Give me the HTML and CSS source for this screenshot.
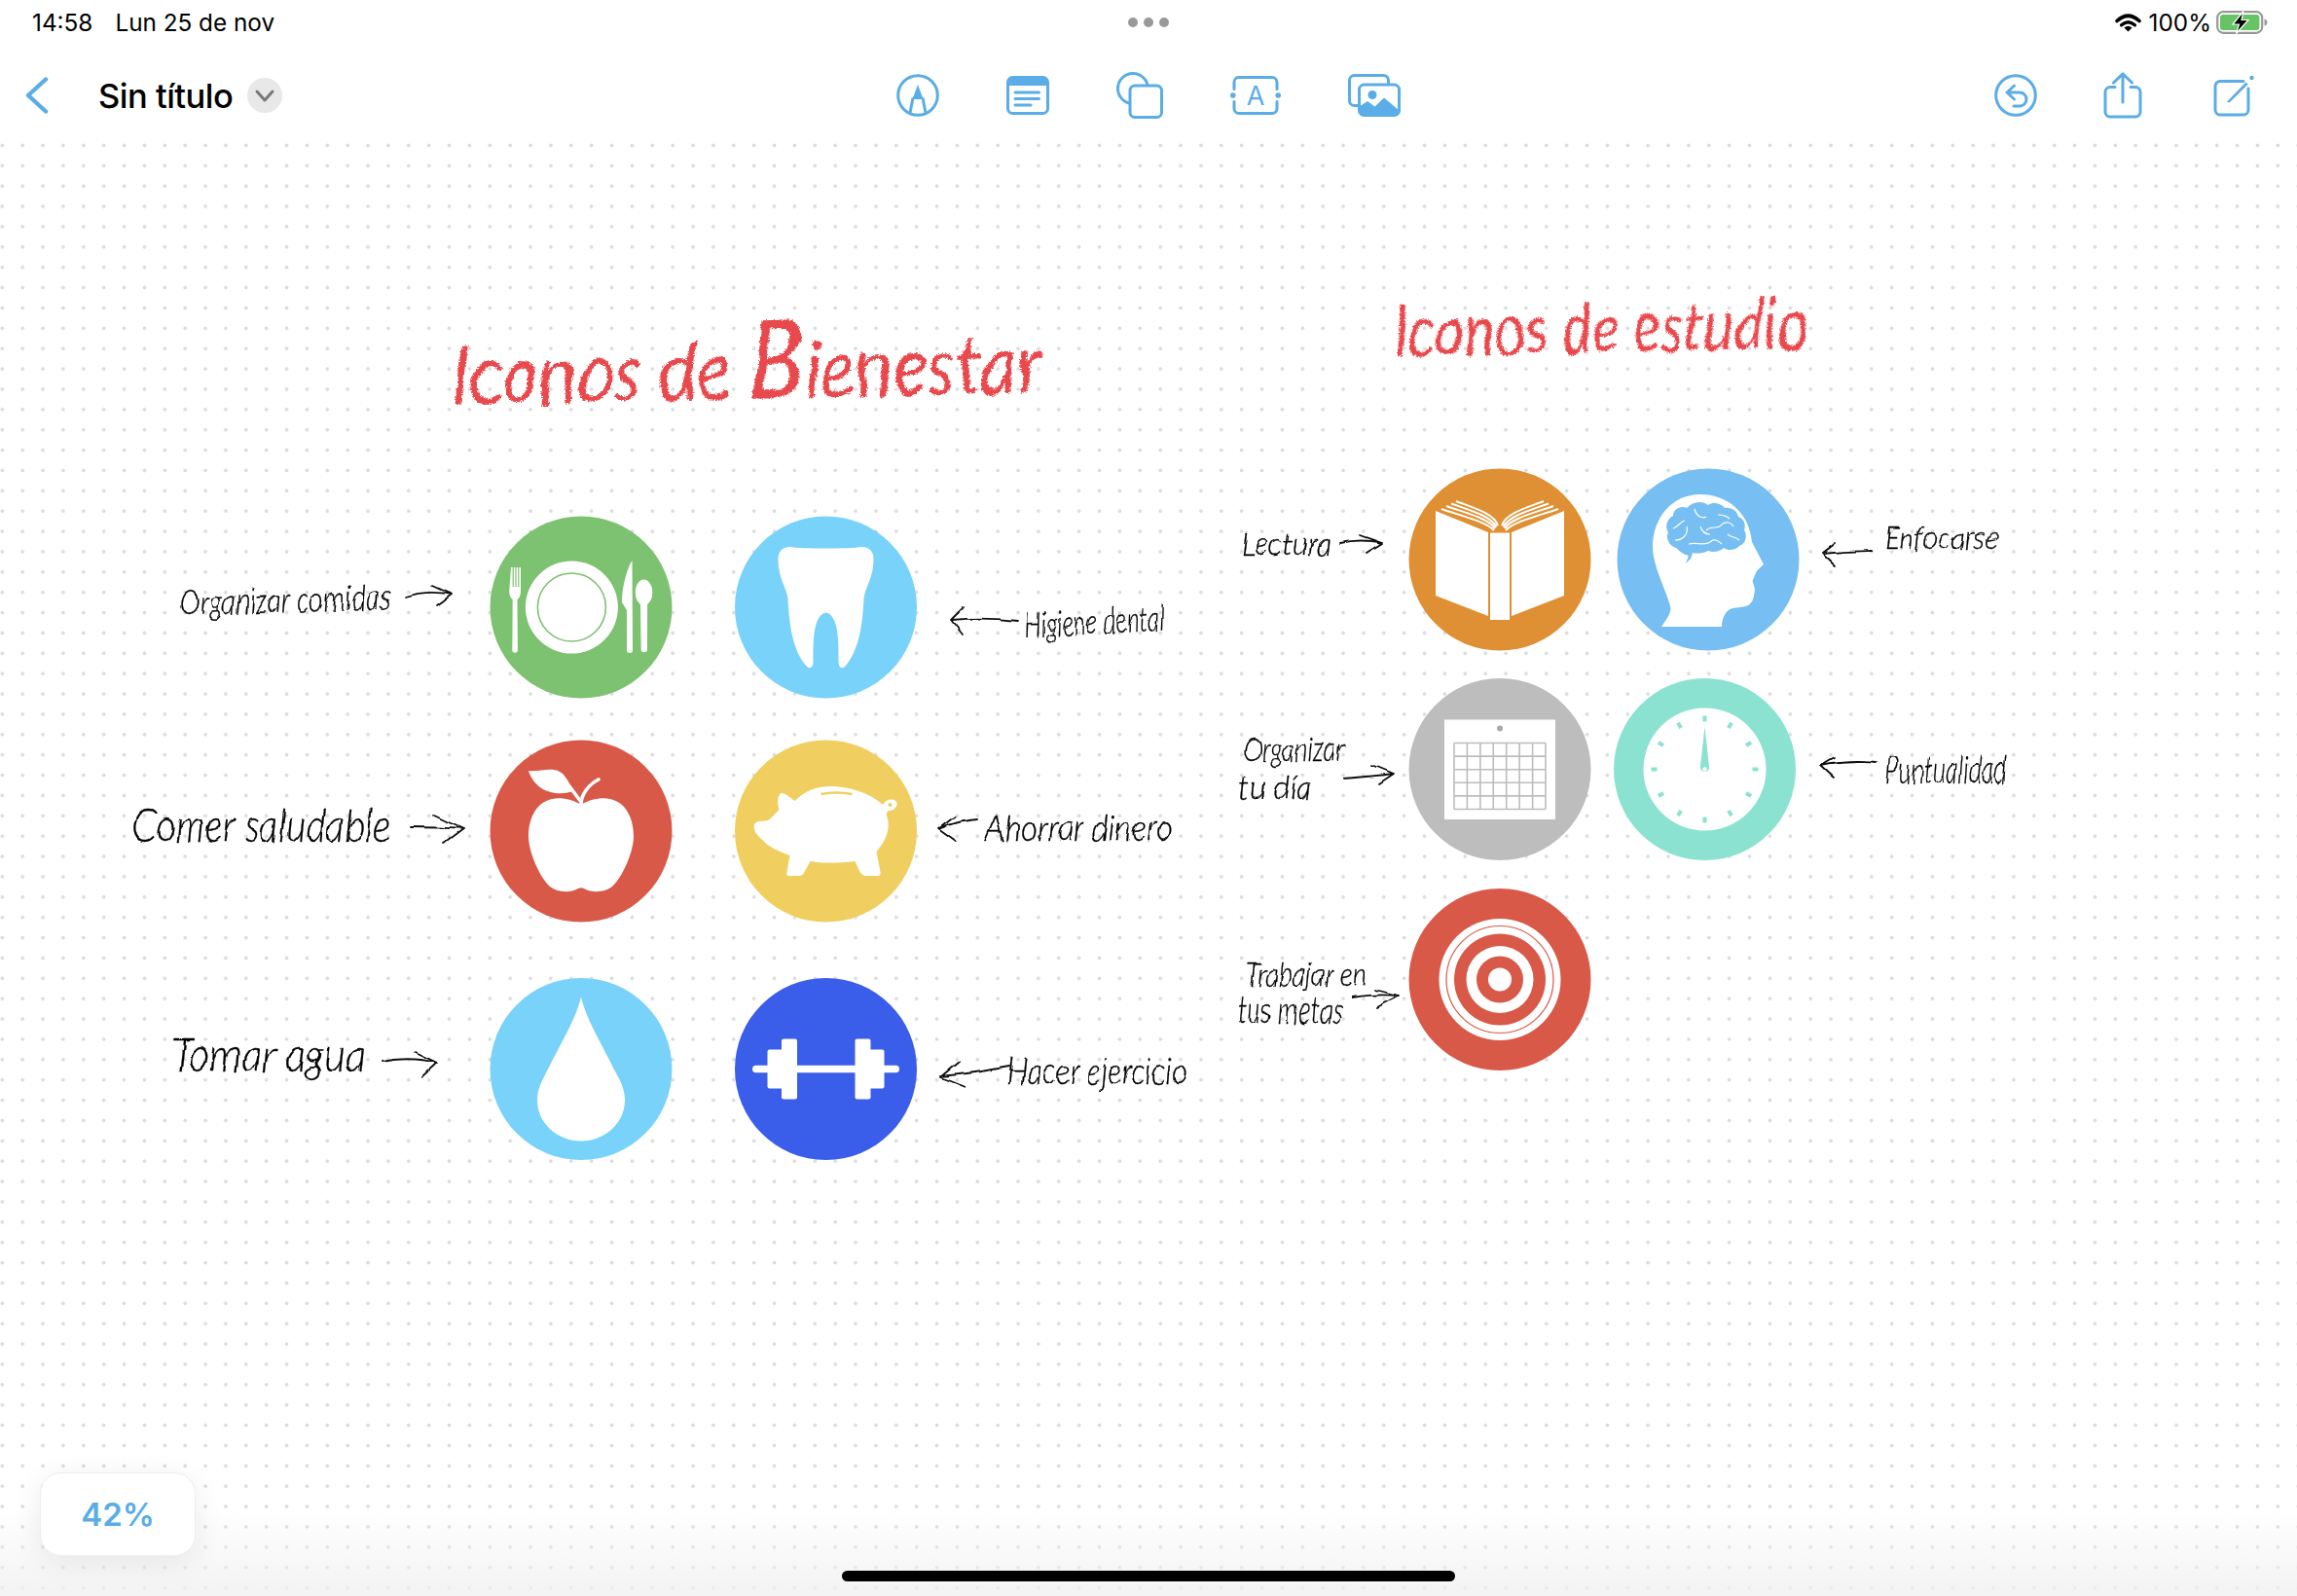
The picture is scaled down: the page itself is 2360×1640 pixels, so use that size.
FILE: index.html
```html
<!DOCTYPE html>
<html lang="es">
<head>
    <meta charset="UTF-8">
    <title>Sin título</title>
    <link rel="stylesheet" href="styles.css">
</head>
<body>
    <div class="screen">
        <div class="status-bar">
            <div class="status-left"><span>14:58</span><span>Lun 25 de nov</span></div>
            <div class="multitask"><i></i><i></i><i></i></div>
            <div class="status-right">
                <svg class="wifi" viewBox="0 0 27 19">
                    <path d="M2,7.5 Q13.5,-3 25,7.5" fill="none" stroke="#000" stroke-width="3.6" stroke-linecap="round"/>
                    <path d="M6.6,11.8 Q13.5,5.6 20.4,11.8" fill="none" stroke="#000" stroke-width="3.4" stroke-linecap="round"/>
                    <path d="M13.5,18.6 L9.4,14.6 Q13.5,11 17.6,14.6 Z" fill="#000"/>
                </svg>
                <span>100%</span>
                <svg class="battery" viewBox="0 0 53 24">
                    <rect x="1.2" y="1.2" width="46" height="21.6" rx="6" fill="#fff" stroke="#999" stroke-width="2.2"/>
                    <rect x="4" y="4" width="40.4" height="16" rx="3" fill="#67c465"/>
                    <path d="M49.5,8.5 C51.5,9 52.5,10.5 52.5,12 C52.5,13.5 51.5,15 49.5,15.5 Z" fill="#999"/>
                    <path d="M28,0.5 L17,14 H23.5 L20.5,23.5 L33,9.5 H26 Z" fill="#000" stroke="#fff" stroke-width="1.2"/>
                </svg>
            </div>
        </div>

        <div class="toolbar">
            <div class="toolbar-left">
                <svg class="back" viewBox="0 0 24 38"><path d="M21,2.5 L3,19 L21,35.5" fill="none" stroke-width="4.4" stroke-linecap="round" stroke-linejoin="round"/></svg>
                <span class="doc-title">Sin título</span>
                <span class="title-menu"><svg viewBox="0 0 36 36"><path d="M10,14 L18,23 L26,14" fill="none" stroke="#77777c" stroke-width="3" stroke-linecap="round" stroke-linejoin="round"/></svg></span>
            </div>
            <div class="toolbar-center">
                <svg class="tool" width="44" height="44" viewBox="0 0 44 44">
                    <circle cx="22" cy="22" r="20.3"/>
                    <path class="solid" d="M22,11 L27,24.5 H17 Z"/>
                    <path d="M17,24.5 L14,40 M27,24.5 L30,40 M17,24.5 H27"/>
                </svg>
                <svg class="tool" width="44" height="40" viewBox="0 0 44 40">
                    <rect x="1.5" y="1.5" width="41" height="37" rx="5"/>
                    <path class="solid" d="M1.5,10 V6.5 a5,5 0 0 1 5,-5 h31 a5,5 0 0 1 5,5 V10 Z"/>
                    <path d="M9,17 H33.5 M9,23.5 H33.5 M9,30 H25" stroke-linecap="round"/>
                </svg>
                <svg class="tool" width="48" height="48" viewBox="0 0 48 48">
                    <circle cx="17" cy="17" r="15.5"/>
                    <rect class="cover" x="14" y="14" width="32.5" height="32.5" rx="5"/>
                </svg>
                <svg class="tool" width="52" height="40" viewBox="0 0 52 40">
                    <path d="M4,13.5 V6.5 a5,5 0 0 1 5,-5 h34 a5,5 0 0 1 5,5 V13.5 M48,26.5 V33.5 a5,5 0 0 1 -5,5 h-34 a5,5 0 0 1 -5,-5 V26.5" stroke-linecap="round"/>
                    <circle class="solid" cx="2.8" cy="20" r="2.8"/>
                    <circle class="solid" cx="49.2" cy="20" r="2.8"/>
                    <text class="tool-letter" x="26" y="29.5">A</text>
                </svg>
                <svg class="tool" width="54" height="44" viewBox="0 0 54 44">
                    <rect x="1.5" y="1.5" width="40" height="31" rx="5"/>
                    <rect class="cover" x="11.5" y="11" width="41" height="31.5" rx="5"/>
                    <circle class="solid" cx="25" cy="21.5" r="4.5"/>
                    <path class="solid" d="M11.5,33.5 L20,28 L27.5,33.5 L37,24.5 L52.5,37.5 V37.5 a5,5 0 0 1 -5,5 H16.5 a5,5 0 0 1 -5,-5 Z"/>
                </svg>
            </div>
            <div class="toolbar-right">
                <svg class="tool" width="44" height="44" viewBox="0 0 44 44">
                    <circle cx="22" cy="22" r="20.3"/>
                    <path d="M20.5,12 L13,19 L20.5,26 M13,19 H26 a7,7 0 0 1 0,14 H20" stroke-linecap="round" stroke-linejoin="round"/>
                </svg>
                <svg class="tool tool-share" width="40" height="48" viewBox="0 0 40 48">
                    <path d="M12,15.5 H7 a5,5 0 0 0 -5,5 V41 a5,5 0 0 0 5,5 H33 a5,5 0 0 0 5,-5 V20.5 a5,5 0 0 0 -5,-5 H28" stroke-linecap="round"/>
                    <path d="M20,31 V2 M10.5,11 L20,1.8 L29.5,11" stroke-linecap="round" stroke-linejoin="round"/>
                </svg>
                <svg class="tool" width="42" height="43" viewBox="0 0 42 43">
                    <path d="M31,6.5 H7 a5,5 0 0 0 -5,5 V36 a5,5 0 0 0 5,5 H31 a5,5 0 0 0 5,-5 V14" stroke-linecap="round"/>
                    <path class="solid" d="M14,27.5 L33.5,7.5 L35.8,9.6 L16.5,28.5 Z"/>
                    <circle class="solid" cx="39.5" cy="3" r="2.2"/>
                </svg>
            </div>
        </div>

        <div class="canvas">
            <svg class="board" viewBox="0 139 2360 1501">
                <defs>
                    <filter id="ink" filterUnits="userSpaceOnUse" x="0" y="139" width="2360" height="1501">
                        <feTurbulence type="fractalNoise" baseFrequency="0.045" numOctaves="2" seed="4" result="n"/>
                        <feDisplacementMap in="SourceGraphic" in2="n" scale="5" xChannelSelector="R" yChannelSelector="G"/>
                    </filter>
                    <filter id="crayon" filterUnits="userSpaceOnUse" x="0" y="139" width="2360" height="1501">
                        <feTurbulence type="fractalNoise" baseFrequency="0.03" numOctaves="2" seed="9" result="slow"/>
                        <feDisplacementMap in="SourceGraphic" in2="slow" scale="10" xChannelSelector="R" yChannelSelector="G" result="bent"/>
                        <feTurbulence type="fractalNoise" baseFrequency="0.7" numOctaves="2" seed="2" result="grain"/>
                        <feDisplacementMap in="bent" in2="grain" scale="4" xChannelSelector="R" yChannelSelector="G"/>
                    </filter>
                </defs>

                <!-- titulos -->
                <g filter="url(#crayon)">
                    <text class="title" x="465" y="416" font-size="84" textLength="606" lengthAdjust="spacingAndGlyphs" transform="rotate(-1.2 465 416)">Iconos de <tspan font-size="112">B</tspan>ienestar</text>
                    <text class="title" x="1433" y="366" font-size="72" textLength="425" lengthAdjust="spacingAndGlyphs" transform="rotate(-1 1433 366)">Iconos de estudio</text>
                </g>

                <!-- notas a mano -->
                <g filter="url(#ink)">
                    <text class="note" x="185" y="632" font-size="36" textLength="217" lengthAdjust="spacingAndGlyphs" transform="rotate(-1.5 185 632)">Organizar comidas</text>
                    <text class="note" x="136" y="865" font-size="48" textLength="265" lengthAdjust="spacingAndGlyphs">Comer saludable</text>
                    <text class="note" x="176" y="1101" font-size="48" textLength="200" lengthAdjust="spacingAndGlyphs">Tomar agua</text>
                    <text class="note" x="1053" y="655" font-size="36" textLength="144" lengthAdjust="spacingAndGlyphs" transform="rotate(-3 1053 655)">Higiene dental</text>
                    <text class="note" x="1012" y="864" font-size="38" textLength="193" lengthAdjust="spacingAndGlyphs">Ahorrar dinero</text>
                    <text class="note" x="1034" y="1114" font-size="38" textLength="186" lengthAdjust="spacingAndGlyphs">Hacer ejercicio</text>
                    <text class="note" x="1276" y="571" font-size="34" textLength="92" lengthAdjust="spacingAndGlyphs">Lectura</text>
                    <text class="note" x="1936" y="564" font-size="32" textLength="118" lengthAdjust="spacingAndGlyphs">Enfocarse</text>
                    <text class="note" x="1278" y="782" font-size="34" textLength="103" lengthAdjust="spacingAndGlyphs">Organizar</text>
                    <text class="note" x="1273" y="821" font-size="34" textLength="75" lengthAdjust="spacingAndGlyphs">tu día</text>
                    <text class="note" x="1937" y="805" font-size="40" textLength="125" lengthAdjust="spacingAndGlyphs">Puntualidad</text>
                    <text class="note" x="1280" y="1013" font-size="34" textLength="124" lengthAdjust="spacingAndGlyphs">Trabajar en</text>
                    <text class="note" x="1272" y="1052" font-size="40" textLength="108" lengthAdjust="spacingAndGlyphs">tus metas</text>

                    <path class="arrow" d="M416,613 Q440,606 464,611 M444,602 L464,611 L449,622"/>
                    <path class="arrow" d="M421,850 Q450,850 476,852 M446,838 L476,852 L456,867"/>
                    <path class="arrow" d="M392,1091 Q420,1085 449,1092 M426,1081 L449,1092 L433,1107"/>
                    <path class="arrow" d="M1045,638 Q1010,634 978,637 M990,624 L977,637 L989,652"/>
                    <path class="arrow" d="M1005,842 Q985,843 964,852 M981,839 L964,852 L982,865"/>
                    <path class="arrow" d="M1037,1096 Q1000,1103 967,1106 M986,1091 L967,1107 L992,1117"/>
                    <path class="arrow" d="M1377,558 Q1398,553 1420,558 M1397,550 L1420,558 L1404,568"/>
                    <path class="arrow" d="M1923,566 Q1896,566 1871,569 M1885,558 L1871,569 L1885,582"/>
                    <path class="arrow" d="M1381,800 Q1406,798 1432,795 M1410,786 L1432,795 L1417,805"/>
                    <path class="arrow" d="M1928,784 Q1899,781 1871,787 M1885,779 L1871,787 L1884,799"/>
                    <path class="arrow" d="M1389,1025 Q1412,1021 1437,1023 M1413,1017 L1437,1023 L1414,1035"/>
                </g>

                <!-- organizar comidas -->
                <g transform="translate(597,624)">
                    <circle r="93.5" fill="#7dc270"/>
                    <circle cx="-9.6" r="47.5" fill="#fff"/>
                    <circle cx="-9.6" r="35" fill="none" stroke="#7dc270" stroke-width="1.6"/>
                    <path class="white" d="M-72,-41 h1.6 v20 h1.2 v-20 h1.6 v20 h1.2 v-20 h1.6 v20 h1.2 v-20 h1.6 v25 c0,4 -2,7 -3.5,8 l0.4,52 a2.6,2.6 0 0 1 -5.6,0 l0.4,-52 c-1.5,-1 -3.5,-4 -3.5,-8 Z"/>
                    <path class="white" d="M52.5,-48 C47,-40 42,-20 42,-5 L47,3 L47,44 a3,3 0 0 0 6,0 Z"/>
                    <path class="white" d="M64.5,-28.5 c5,0 8.8,6 8.8,13 c0,6 -2,10 -5.2,12.5 L68,43 a3.2,3.2 0 0 1 -6.4,0 L61,-3 C58,-5.5 55.8,-9.5 55.8,-15.5 C55.8,-22.5 59.5,-28.5 64.5,-28.5 Z"/>
                </g>

                <!-- higiene dental -->
                <g transform="translate(848.5,624)">
                    <circle r="93.5" fill="#79d2f9"/>
                    <path class="white" d="M-37,-62 C-25,-60 25,-60 37,-62 C45,-62 49,-57 49,-50 C49,-30 41,-22 39,-9 C38,10 36,40 22,58 C18,64 13,64 13,55 C13,40 14,8 0,5.5 C-14,8 -13,40 -13,55 C-13,64 -18,64 -22,58 C-36,40 -38,10 -39,-9 C-41,-22 -49,-30 -49,-50 C-49,-57 -45,-62 -37,-62 Z"/>
                </g>

                <!-- comer saludable -->
                <g transform="translate(597,854)">
                    <circle r="93.5" fill="#d95948"/>
                    <path class="white" d="M0,-27 C-8,-32 -20,-35 -30,-33 C-48,-29 -54,-10 -54,5 C-54,22 -42,48 -32,57 C-24,63 -12,64 -3,59 Q0,57.5 3,59 C12,64 24,63 32,57 C42,48 54,22 54,5 C54,-10 48,-29 30,-33 C20,-35 8,-32 0,-27 Z"/>
                    <path class="white" d="M-54,-62 C-42,-60 -28,-68 -18,-58 C-14,-53 -10,-47 -9,-41 C-22,-36 -46,-38 -54,-62 Z"/>
                    <path d="M0,-27 C0,-38 8,-48 18,-53 M-12,-46 L0,-30" fill="none" stroke="#fff" stroke-width="3.6" stroke-linecap="round"/>
                </g>

                <!-- ahorrar dinero -->
                <g transform="translate(848.5,854)">
                    <circle r="93.5" fill="#f0cf60"/>
                    <path class="white" d="M-73.5,-7 C-70,-12 -64,-9 -58.5,-11.5 C-55,-14 -52,-18 -48,-22 C-50,-28 -50,-37 -46,-39 C-41,-39 -36,-34 -32,-31 C-22,-41 -10,-46 5,-46 C22,-46 45,-40 58.5,-27 C61,-32 67,-34 72,-31 C75,-28 72,-22 66,-21 C62,-21 62,-18 63,-14 C66,-6 64,8 52,21 L56,42 Q57,46 53,46 H40 Q37,45 35,42 L30,31 C12,33 -5,33 -16,31 L-22,42 Q-24,46 -27,46 H-38 Q-41,46 -40,42 L-37,25 C-48,21 -60,16 -65,9 C-70,5 -75,0 -73.5,-7 Z"/>
                    <path d="M-5,-38 Q11,-41 27,-38" fill="none" stroke="#f0cf60" stroke-width="2.6"/>
                    <circle cx="66" cy="-27" r="2" fill="#f0cf60"/>
                </g>

                <!-- tomar agua -->
                <g transform="translate(597,1098.5)">
                    <circle r="93.5" fill="#79d2f9"/>
                    <path class="white" d="M0,-74 C6,-50 20,-28 38,8 C43,17 45,25 45,32 C45,56 24,74 0,74 C-24,74 -45,56 -45,32 C-45,25 -43,17 -38,8 C-20,-28 -6,-50 0,-74 Z"/>
                </g>

                <!-- hacer ejercicio -->
                <g transform="translate(848.5,1098.5)">
                    <circle r="93.5" fill="#3a5dea"/>
                    <rect class="white" x="-75.5" y="-3.8" width="151" height="7.6" rx="3.8"/>
                    <rect class="white" x="-60" y="-20" width="18" height="40" rx="2"/>
                    <rect class="white" x="-45.5" y="-31" width="16" height="62" rx="2"/>
                    <rect class="white" x="30" y="-31" width="16" height="62" rx="2"/>
                    <rect class="white" x="42" y="-20" width="18" height="40" rx="2"/>
                </g>

                <!-- lectura -->
                <g transform="translate(1541,575)">
                    <circle r="93.5" fill="#e09034"/>
                    <path class="white" d="M-66,-50 L-12,-28 V58 L-66,37 Z M66,-50 L12,-28 V58 L66,37 Z"/>
                    <rect class="white" x="-10" y="-27.5" width="20" height="89.5"/>
                    <path d="M-45,-60 C-30,-54 -6,-48 -2,-35 M-50,-57.5 C-32,-51 -9,-45 -3.5,-33.5 M-55,-55 C-35,-48 -11,-42 -5,-32 M-60,-52 C-40,-45 -14,-39 -6,-30 M45,-60 C30,-54 6,-48 2,-35 M50,-57.5 C32,-51 9,-45 3.5,-33.5 M55,-55 C35,-48 11,-42 5,-32 M60,-52 C40,-45 14,-39 6,-30" fill="none" stroke="#fff" stroke-width="2"/>
                </g>

                <!-- enfocarse -->
                <g transform="translate(1755,575)">
                    <circle r="93.5" fill="#77bff2"/>
                    <path class="white" d="M-48,69 C-42,60 -37,54 -39,47.5 C-43,32 -57,6 -57,-13 C-57,-42 -38,-67 -8,-67 C18,-67 42,-50 45,-18 L57,5 L50,11.5 L45.5,22 L48,30 C47,40 46,47 36,48.5 L25,50 C18,52 14,60 14,69 Z"/>
                    <path fill="#77bff2" d="M-23,4 L-20,-4 C-28,-6 -30,-10 -33,-12 C-40,-14 -44,-22 -41,-28 C-45,-34 -42,-42 -36,-45 C-36,-52 -28,-56 -22,-53 C-16,-60 -6,-61 0,-56 C6,-60 14,-57 17,-53 C24,-54 30,-50 31,-44 C37,-42 39,-36 37,-30 C41,-24 38,-16 32,-14 C28,-9 20,-9 16,-12 C12,-8 5,-7 0,-9 C-6,-6 -12,-6 -16,-7 L-18,-1 Z"/>
                    <path d="M-36,-32 C-30,-34 -28,-40 -24,-40 M-34,-20 C-26,-20 -20,-26 -22,-34 M-14,-52 C-12,-44 -6,-42 -2,-44 M-2,-30 C4,-36 10,-30 14,-36 C18,-40 24,-38 26,-34 M-20,-16 C-12,-18 -4,-14 2,-18 C6,-22 10,-20 14,-16 M-8,-34 C-6,-28 -2,-26 2,-26 M20,-26 C24,-22 28,-24 32,-20 M10,-46 C16,-46 20,-44 22,-42" fill="none" stroke="#fff" stroke-width="1.2"/>
                </g>

                <!-- organizar tu dia -->
                <g transform="translate(1541,790.5)">
                    <circle r="93.5" fill="#bdbdbd"/>
                    <rect class="white" x="-57" y="-51" width="114" height="102.5"/>
                    <circle cy="-42" r="3" fill="#a9a9a9"/>
                    <path d="M-47,-27 V41 M-33.6,-27 V41 M-20.1,-27 V41 M-6.7,-27 V41 M6.7,-27 V41 M20.1,-27 V41 M33.6,-27 V41 M47,-27 V41 M-47,-27 H47 M-47,-13.4 H47 M-47,0.2 H47 M-47,13.8 H47 M-47,27.4 H47 M-47,41 H47" fill="none" stroke="#bdbdbd" stroke-width="1.6"/>
                </g>

                <!-- puntualidad -->
                <g transform="translate(1751.5,790.5)">
                    <circle r="93.5" fill="#8ce2d0"/>
                    <circle r="63" fill="#fff"/>
                    <g class="ticks">
                        <path d="M0,-55 V-49"/>
                        <path d="M0,-55 V-49" transform="rotate(30)"/>
                        <path d="M0,-55 V-49" transform="rotate(60)"/>
                        <path d="M0,-55 V-49" transform="rotate(90)"/>
                        <path d="M0,-55 V-49" transform="rotate(120)"/>
                        <path d="M0,-55 V-49" transform="rotate(150)"/>
                        <path d="M0,-55 V-49" transform="rotate(180)"/>
                        <path d="M0,-55 V-49" transform="rotate(210)"/>
                        <path d="M0,-55 V-49" transform="rotate(240)"/>
                        <path d="M0,-55 V-49" transform="rotate(270)"/>
                        <path d="M0,-55 V-49" transform="rotate(300)"/>
                        <path d="M0,-55 V-49" transform="rotate(330)"/>
                    </g>
                    <path d="M0,-44 L4.6,-2 A4.6,4.6 0 1 1 -4.6,-2 Z" fill="#8ce2d0"/>
                    <circle r="2.2" fill="#fff"/>
                </g>

                <!-- trabajar en tus metas -->
                <g transform="translate(1541,1006.5)">
                    <circle r="93.5" fill="#d95948"/>
                    <circle r="62.5" fill="#fff"/>
                    <circle r="55" fill="none" stroke="#d95948" stroke-width="1.2"/>
                    <circle r="47" fill="#d95948"/>
                    <circle r="34.5" fill="#fff"/>
                    <circle r="24" fill="#d95948"/>
                    <circle r="12" fill="#fff"/>
                </g>
            </svg>
            <div class="bottom-fade"></div>
            <div class="zoom-badge">42%</div>
            <div class="home-bar"></div>
        </div>
    </div>
</body>
</html>
```

FILE: styles.css
```css
* {
    box-sizing: border-box;
}
body {
    margin: 0;
    background-color: #fff;
    font-family: Inter, "Liberation Sans", sans-serif;
    color: #000;
}
.screen {
    width: 2360px;
    height: 1640px;
    display: flex;
    flex-direction: column;
    overflow: hidden;
}

/* status bar */
.status-bar {
    height: 46px;
    flex: none;
    display: grid;
    grid-template-columns: 1fr auto 1fr;
    align-items: center;
    padding: 0 30px;
    font-size: 24.3px;
}
.status-left {
    display: flex;
    gap: 23px;
    padding-left: 3px;
}
.multitask {
    display: flex;
    gap: 6px;
}
.multitask i {
    width: 10px;
    height: 10px;
    border-radius: 50%;
    background-color: #999;
}
.status-right {
    display: flex;
    justify-content: flex-end;
    align-items: center;
    gap: 8px;
}
.wifi {
    width: 27px;
    height: 19px;
}
.battery {
    width: 53px;
    height: 24px;
    margin-left: -3px;
}

/* toolbar */
.toolbar {
    height: 93px;
    flex: none;
    display: grid;
    grid-template-columns: 1fr auto 1fr;
    align-items: center;
    padding: 11px 44px 0 44px;
}
.toolbar-left {
    display: flex;
    align-items: center;
    margin-left: -18px;
}
.back {
    width: 24px;
    height: 38px;
    stroke: #5aade6;
    margin-right: 51px;
}
.doc-title {
    font-size: 34.5px;
    font-weight: 500;
    letter-spacing: -0.5px;
}
.title-menu {
    width: 36px;
    height: 36px;
    margin-left: 15px;
    border-radius: 50%;
    background-color: #e8e8e8;
}
.title-menu svg {
    display: block;
}
.toolbar-center {
    display: flex;
    align-items: center;
    gap: 69px;
}
.toolbar-right {
    display: flex;
    justify-content: flex-end;
    align-items: center;
    gap: 70px;
}
.tool-share {
    margin: 0 3px 0 -2px;
}
.tool {
    fill: none;
    stroke: #5aade6;
    stroke-width: 3;
}
.tool .solid {
    fill: #5aade6;
    stroke: none;
}
.tool .cover {
    fill: #fff;
}
.tool-letter {
    fill: #5aade6;
    stroke: none;
    font-size: 27px;
    text-anchor: middle;
}

/* canvas */
.canvas {
    flex: 1;
    position: relative;
    background-image: radial-gradient(circle, #dcdcdc 1.7px, transparent 2.2px);
    background-size: 20.88px 20.88px;
    background-position: -8.15px 0;
}
.board {
    display: block;
    width: 2360px;
    height: 1501px;
}
.white {
    fill: #fff;
}
.title {
    font-family: Lato, sans-serif;
    font-style: italic;
    font-weight: 400;
    fill: #e8484e;
}
.note {
    font-family: Lato, sans-serif;
    font-style: italic;
    font-weight: 300;
    fill: #000;
    stroke: #000;
    stroke-width: 0.35;
}
.arrow {
    fill: none;
    stroke: #111;
    stroke-width: 1.8;
    stroke-linecap: round;
    stroke-linejoin: round;
}
.ticks path {
    fill: none;
    stroke: #8ce2d0;
    stroke-width: 4;
}
.bottom-fade {
    position: absolute;
    left: 0;
    right: 0;
    bottom: 0;
    height: 90px;
    background: linear-gradient(rgba(240,240,240,0), rgba(240,240,240,0.8));
}
.zoom-badge {
    position: absolute;
    left: 41px;
    top: 1374px;
    width: 160px;
    height: 86px;
    display: flex;
    align-items: center;
    justify-content: center;
    background-color: #fff;
    border: 1px solid #eee;
    border-radius: 22px;
    box-shadow: 0 6px 30px rgba(0,0,0,0.08);
    font-size: 33px;
    font-weight: 600;
    color: #5aade6;
}
.home-bar {
    position: absolute;
    left: 865px;
    top: 1475px;
    width: 630px;
    height: 11px;
    border-radius: 6px;
    background-color: #000;
}
```
